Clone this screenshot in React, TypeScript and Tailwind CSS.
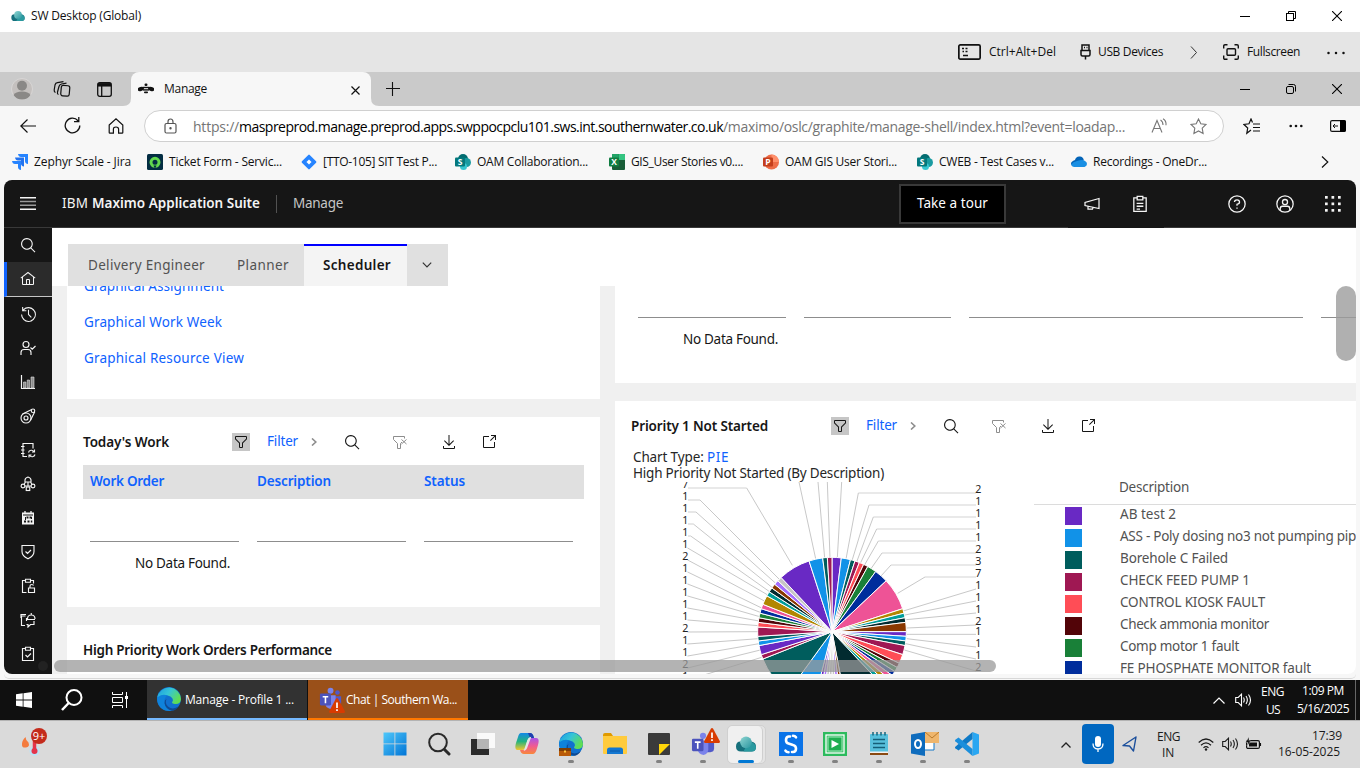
import { useLayoutEffect, useRef, useState } from "react";
import type { ReactNode } from "react";

const SEGOE = "font-['Open_Sans','Noto_Sans',sans-serif]";
const PLEX = "font-['Noto_Sans','Open_Sans',sans-serif]";

/** A single line of text whose tracking is adjusted to fill the width it is given. */
function Line({ w, className = "", children }: { w: number; className?: string; children: string }) {
  const ref = useRef<HTMLSpanElement>(null);
  const [gap, setGap] = useState(0);
  useLayoutEffect(() => {
    if (ref.current) {
      const natural = ref.current.getBoundingClientRect().width - gap * children.length;
      setGap((w - natural) / children.length);
    }
  }, [w, children]);
  return (
    <span className={`block shrink-0 whitespace-nowrap ${className}`} style={{ width: w }}>
      <span ref={ref} className="inline-block whitespace-pre" style={{ letterSpacing: gap }}>{children}</span>
    </span>
  );
}

/** 32-unit icon, drawn with fills. */
function Solid({ d, className = "size-4" }: { d: string[]; className?: string }) {
  return (
    <svg viewBox="0 0 32 32" className={`shrink-0 ${className}`} fill="currentColor">
      {d.map((p) => <path key={p} d={p} />)}
    </svg>
  );
}

/** 32-unit icon, drawn with strokes. */
function Outline({ className = "size-4", sw = 2, children }: { className?: string; sw?: number; children: ReactNode }) {
  return (
    <svg viewBox="0 0 32 32" className={`shrink-0 ${className}`} fill="none" stroke="currentColor" strokeWidth={sw}>
      {children}
    </svg>
  );
}

const SEARCH = ["M29,27.5859l-7.5521-7.5521a11.0177,11.0177,0,1,0-1.4141,1.4141L27.5859,29ZM4,13a9,9,0,1,1,9,9A9.01,9.01,0,0,1,4,13Z"];
const HOME = ["M16.6123,2.2138a1.01,1.01,0,0,0-1.2427,0L1,13.4194l1.2427,1.5717L4,13.6208V26a2.0041,2.0041,0,0,0,2,2H26a2.0037,2.0037,0,0,0,2-2V13.63L29.7573,15,31,13.4282ZM18,26H14V18h4Zm2,0V18a2.0023,2.0023,0,0,0-2-2H14a2.002,2.002,0,0,0-2,2v8H6V12.0615l10-7.79,10,7.8005V26Z"];
const RECENT = ["M20.59 22 15 16.41 15 7 17 7 17 15.58 22 20.59 20.59 22z", "M16,2A13.94,13.94,0,0,0,6,6.23V2H4v8h8V8H7.08A12,12,0,1,1,4,16H2A14,14,0,1,0,16,2Z"];
const FILTER = ["M18,28H14a2,2,0,0,1-2-2V18.41L4.59,11A2,2,0,0,1,4,9.59V6A2,2,0,0,1,6,4H26a2,2,0,0,1,2,2V9.59A2,2,0,0,1,27.41,11L20,18.41V26A2,2,0,0,1,18,28ZM6,6V9.59l8,8V26h4V17.59l8-8V6Z"];
const DOWNLOAD = ["M26 24v4H6V24H4v4a2 2 0 0 0 2 2H26a2 2 0 0 0 2-2V24zM26 14L24.59 12.59 17 20.17 17 2 15 2 15 20.17 7.41 12.59 6 14 16 24 26 14z"];
const LAUNCH = ["M26,28H6a2.0027,2.0027,0,0,1-2-2V6A2.0027,2.0027,0,0,1,6,4H16V6H6V26H26V16h2V26A2.0027,2.0027,0,0,1,26,28Z", "M20 2 20 4 26.586 4 18 12.586 19.414 14 28 5.414 28 12 30 12 30 2 20 2z"];

function WindowButtons({ rounded = false }: { rounded?: boolean }) {
  return (
    <div className="ml-auto mr-[18px] flex items-center gap-9">
      <svg width="10" height="10" className="shrink-0"><path d="M0 5.5h10" stroke="#000" /></svg>
      <svg width="10" height="10" className="shrink-0" fill="none" stroke="#000">
        <rect x=".5" y="2.5" width="7" height="7" rx={rounded ? 1.5 : 0} />
        <path d={rounded ? "M2.5.5h5q2 0 2 2v5" : "M2.5 2.5v-2h7v7h-2"} />
      </svg>
      <svg width="10" height="10" className="shrink-0"><path d="M0 0l10 10M10 0L0 10" stroke="#000" strokeWidth="1.1" /></svg>
    </div>
  );
}

function CloudIcon({ className }: { className: string }) {
  return (
    <svg viewBox="0 0 24 18" className={`shrink-0 ${className}`}>
      <defs>
        <linearGradient id="cl" x1="0" y1="0" x2="1" y2="1"><stop stopColor="#8fd6d2" /><stop offset="1" stopColor="#2a96a0" /></linearGradient>
      </defs>
      <path d="M5.500 6H18.500Q24 7 24 12.500T18.500 18H6Q0 18 0 12T5.500 6Z" fill="#16707c" />
      <path d="M14 8q3-3 7 0q3 2 3 5q0 5-5.500 5H9Z" fill="#2a9aa0" />
      <circle cx="12" cy="7" r="7" fill="url(#cl)" />
    </svg>
  );
}

function EdgeIcon({ className }: { className: string }) {
  return (
    <svg viewBox="0 0 24 24" className={`shrink-0 ${className}`}>
      <defs>
        <linearGradient id="eg" x1="0" y1="0" x2="1" y2=".5"><stop stopColor="#1a9be0" /><stop offset=".5" stopColor="#35c4d8" /><stop offset="1" stopColor="#5fdd55" /></linearGradient>
      </defs>
      <circle cx="12" cy="12" r="12" fill="#1170cf" />
      <path d="M.2 10.500A12 12 0 0 1 24 12q-.2 5.300-6 5q-4.200-.3-2.500-2.500Q17 12 13.500 9.500Q7 6 .2 10.500Z" fill="url(#eg)" />
      <path d="M.2 10.500Q5 6.500 10.500 8.500Q7 10.500 7.500 15q1 6.500 7.500 8.700Q6 25 2 18.500Q-.3 14.500.2 10.500Z" fill="#0f82db" />
      <path d="M9.500 12q-2 4 1.500 7.500q5 4 11-.5q-3 4.500-7 4.800q-6.500-1.500-7.500-7.500Q7.300 13 9.500 12Z" fill="#104a92" />
    </svg>
  );
}

function TeamsIcon({ className = "size-[26px]" }: { className?: string }) {
  return (
    <svg viewBox="0 0 26 26" className={`shrink-0 ${className}`}>
      <circle cx="20" cy="6" r="2.500" fill="#5059c9" /><circle cx="12.500" cy="4" r="3.200" fill="#7b83eb" />
      <path d="M16 10h8v7q0 4-4 4h-4Z" fill="#5059c9" />
      <path d="M7 9h11v9q0 5-5 6q-6-1-6-6Z" fill="#7b83eb" />
      <rect x="1" y="7" width="12" height="13" rx="1.200" fill="#4b53bc" />
      <path d="M4 10.500h6M7 10.500v7" stroke="#fff" strokeWidth="1.700" />
    </svg>
  );
}

function Warning() {
  return (
    <svg viewBox="0 0 16 15" className="h-[15px] w-4 shrink-0">
      <path d="M7 .6q1-1 2 0l7 13q0 1.400-1 1.400H1q-1 0-1-1.400Z" fill="#d83b01" />
      <path d="M8 4.500v5.500M8 11.200v1.800" stroke="#fff" strokeWidth="1.700" />
    </svg>
  );
}

function RemoteBars() {
  return (
    <>
      <div className="flex h-8 items-center bg-white pl-[11px]">
        <CloudIcon className="h-2.5 w-3.5" />
        <Line w={110} className="ml-1.5 text-[12px] leading-8 text-[#111]">SW Desktop (Global)</Line>
        <WindowButtons />
      </div>
      <div className="flex h-10 items-center bg-[#e5e5e5] pl-[958px] text-[12px] text-[#111]">
        <svg width="23" height="16" className="shrink-0" fill="none" stroke="#111" strokeWidth="1.700">
          <rect x=".85" y=".85" width="21.300" height="14.300" rx="1.500" />
          <path d="M4 4.500h2M7.500 4.500h2M4.500 7.500h1.500M7.500 7.500h2M5 11.500h5" strokeWidth="1.400" />
        </svg>
        <Line w={67} className="ml-2">Ctrl+Alt+Del</Line>
        <svg width="12" height="16" className="ml-6 shrink-0" fill="none" stroke="#111" strokeWidth="1.500">
          <path d="M2 6.500V1h7v5.500M1 6.500h9v4q0 1.500-1.500 1.500h-6Q1 12 1 10.500ZM5.500 12v3.500M4 3.500h1M6.500 3.500h1" />
        </svg>
        <Line w={65} className="ml-1.5">USB Devices</Line>
        <svg width="8" height="13" className="ml-[27px] shrink-0" fill="none" stroke="#333"><path d="M1 .5l5.500 6L1 12.500" /></svg>
        <svg width="16" height="16" className="ml-[25px] shrink-0" fill="none" stroke="#111" strokeWidth="1.400">
          <path d="M.7 4.500V2Q.7.7 2 .7h2.500M11.500.7H14q1.300 0 1.300 1.300v2.500M15.300 11.500V14q0 1.300-1.300 1.300h-2.500M4.500 15.300H2Q.7 15.300.7 14v-2.500" />
          <rect x="4" y="4.800" width="8.500" height="6.500" rx="1" />
        </svg>
        <Line w={53} className="ml-2">Fullscreen</Line>
        <svg width="18" height="4" className="ml-[27px] mt-0.5 shrink-0" fill="#111"><circle cx="1.500" cy="2" r="1.250" /><circle cx="9" cy="2" r="1.250" /><circle cx="16.500" cy="2" r="1.250" /></svg>
      </div>
    </>
  );
}

function TabStrip() {
  return (
    <div className="flex h-[34px] items-center bg-[#cacaca] pl-[11px]">
      <svg viewBox="0 0 22 22" className="size-[22px] shrink-0">
        <circle cx="11" cy="11" r="10.500" fill="#c4c0be" stroke="#d8d6d5" /><circle cx="11" cy="7.700" r="5" fill="#8a8886" /><path d="M2.500 17q2-3.500 8.500-3.500t8.500 3.500q-3 4.500-8.500 4.500T2.500 17Z" fill="#8a8886" />
      </svg>
      <svg width="18" height="17" className="ml-5 shrink-0" fill="none" stroke="#111" strokeWidth="1.200">
        <rect x="8" y="4.500" width="8.500" height="10.500" rx="2" transform="rotate(5 12 10)" /><path d="M5.500 13.500Q4 13 4.500 11L6 5.500Q6.500 3.500 8.500 3l5-.8M2.500 11.500Q1 11 1.200 9L2 4q.5-2 2.500-2.300l6-1" />
      </svg>
      <svg width="15" height="15" className="ml-[26px] shrink-0" fill="none" stroke="#111" strokeWidth="1.300">
        <rect x=".7" y=".7" width="13.600" height="13.600" rx="2" /><path d="M1 2.800h13" strokeWidth="3.500" /><path d="M4.700 4v10" />
      </svg>
      <div className="ml-[11px] flex h-full w-2 shrink-0 items-end"><svg width="8" height="8"><path d="M8 0v8H0Q8 8 8 0Z" fill="#f7f7f7" /></svg></div>
      <div className="flex h-full w-60 shrink-0 items-center rounded-t-lg bg-[#f7f7f7] pl-[7px]">
        <svg viewBox="0 0 16 12" className="h-3 w-4 shrink-0" fill="#111">
          <ellipse cx="2.800" cy="6" rx="3.200" ry="2" transform="rotate(-15 2.800 6)" /><ellipse cx="13.200" cy="6" rx="3.200" ry="2" transform="rotate(15 13.200 6)" />
          <rect x="6.500" y="0.500" width="3" height="2.500" rx="1.200" /><rect x="5" y="3.800" width="6" height="1.400" /><rect x="5" y="6.200" width="6" height="1.400" /><rect x="6" y="8.600" width="4" height="1.600" rx=".8" />
        </svg>
        <Line w={43} className="ml-2.5 text-[12px] text-[#111]">Manage</Line>
        <svg width="9" height="9" className="ml-[144px] mt-0.5 shrink-0"><path d="M.5.5l8 8M8.500.5l-8 8" stroke="#111" strokeWidth="1.200" /></svg>
      </div>
      <div className="flex h-full w-2 shrink-0 items-end"><svg width="8" height="8"><path d="M0 0v8h8Q0 8 0 0Z" fill="#f7f7f7" /></svg></div>
      <svg width="14" height="14" className="ml-[7px] shrink-0"><path d="M6.500 0v14M0 6.500h14" stroke="#111" strokeWidth="1.100" /></svg>
      <WindowButtons rounded />
    </div>
  );
}

function AddressBar() {
  return (
    <div className="flex h-10 items-center bg-[#f7f7f7] pl-5 text-[#111]">
      <svg width="16" height="14" className="-mt-px shrink-0" fill="none" stroke="currentColor" strokeWidth="1.200"><path d="M7.500 .5L.8 7l6.700 6.500M1 7h15" /></svg>
      <svg width="17" height="17" className="-mt-px ml-7 shrink-0" fill="none" stroke="currentColor" strokeWidth="1.300"><path d="M15.800 8.500A7.300 7.300 0 1 1 14 3.700M14.800 0v4.700H10" /></svg>
      <svg width="16" height="16" className="-mt-px ml-[27px] shrink-0" fill="none" stroke="currentColor" strokeWidth="1.200"><path d="M1.200 7L8 .9 14.800 7v7.500q0 .7-.7.7h-3.500v-4q0-2.200-2.600-2.200T5.400 11.200v4H1.900q-.7 0-.7-.7Z" /></svg>
      <div className="ml-5 flex h-8 w-[1080px] shrink-0 items-center rounded-full border border-[#d0d0d0] bg-white pl-[19px] text-[14px] text-[#757575]">
        <svg width="13" height="16" className="shrink-0" fill="none" stroke="#555" strokeWidth="1.200"><rect x="1" y="5.500" width="11" height="9.500" rx="1.500" /><path d="M4 5.500V4q0-3 2.500-3T9 4v1.500" /><circle cx="6.500" cy="10.200" r=".6" fill="#555" /></svg>
        <Line w={46} className="ml-4">https://</Line>
        <Line w={484} className="text-black">maspreprod.manage.preprod.apps.swppocpclu101.sws.int.southernwater.co.uk</Line>
        <Line w={402}>/maximo/oslc/graphite/manage-shell/index.html?event=loadap...</Line>
        <svg width="17" height="16" className="ml-[26px] shrink-0" fill="none" stroke="#777" strokeWidth="1.100"><path d="M1 14.500L6 2.500l5 12M2.800 10.500h6.500M9.500 2q2.500 1.500 2.500 5M12 .7q3.500 2 3 6.500" /></svg>
        <svg viewBox="0 0 17 17" className="ml-[22px] size-[17px] shrink-0" fill="none" stroke="#777" strokeWidth="1.100"><path d="M8.500 1l2.300 4.800 5.200.7-3.800 3.700.9 5.200-4.600-2.500-4.600 2.500.9-5.200L1 6.500l5.200-.7Z" /></svg>
      </div>
      <svg width="18" height="17" className="ml-[19px] shrink-0" fill="none" stroke="currentColor" strokeWidth="1.200"><path d="M8 12l-4.200 3.300.9-5.300L1 6.500l5-.7L8 1l1.500 3.500M10 6h7M10 9.500h7M10 13h7" /></svg>
      <svg width="14" height="4" className="ml-7 shrink-0" fill="#111"><circle cx="1.700" cy="2" r="1.300" /><circle cx="7" cy="2" r="1.300" /><circle cx="12.300" cy="2" r="1.300" /></svg>
      <svg width="16" height="12" className="ml-[27px] shrink-0"><rect x=".6" y=".6" width="14.800" height="10.800" rx="1.500" fill="none" stroke="#111" strokeWidth="1.200" /><path d="M10 0h4q2 0 2 2v8q0 2-2 2h-4Z" /><path d="M8 6H3M5 4L3 6l2 2" fill="none" stroke="#111" /></svg>
    </div>
  );
}

function OfficeTile({ letter, dark, base, light, round }: { letter: string; dark: string; base: string; light: string; round: boolean }) {
  return (
    <svg viewBox="0 0 16 16" className="size-4 shrink-0">
      {round
        ? <><circle cx="8.500" cy="8" r="7.500" fill={base} /><path d="M8.500 .5A7.500 7.500 0 0 1 16 8H8.500Z" fill={light} /></>
        : <><rect x="3" y="0" width="13" height="16" rx="1" fill={base} /><path d="M9.500 0H15q1 0 1 1v5H9.500Z" fill={light} /><path d="M3 0h6.500v6H3Z" fill="#21a366" /></>}
      <rect x="0" y="3.500" width="10" height="9" rx="1" fill={dark} />
      <text x="5" y="11" textAnchor="middle" fontSize="8.500" fontWeight="700" fill="#fff">{letter}</text>
    </svg>
  );
}

const sharepoint = (
  <svg viewBox="0 0 16 16" className="size-4 shrink-0">
    <circle cx="8" cy="5" r="5" fill="#036c70" /><circle cx="11.500" cy="8.500" r="4.500" fill="#1a9ba1" /><circle cx="8.500" cy="12.500" r="3.500" fill="#37c6d0" />
    <rect x="0" y="3.500" width="10" height="9" rx="1" fill="#03787c" />
    <text x="5" y="11" textAnchor="middle" fontSize="8.500" fontWeight="700" fill="#fff">S</text>
  </svg>
);

const bookmarks: { text: string; w: number; box: string; icon: ReactNode }[] = [
  { text: "Zephyr Scale - Jira", w: 97, box: "w-[135px]", icon: <svg viewBox="0 0 16 16" className="size-4 shrink-0"><path d="M6 0h10v10q-3-.5-3-3V3H9Q6.500 3 6 0Z" fill="#2684ff" /><path d="M3 3.500h9v9q-3-.5-3-3v-3H6Q3.500 6.500 3 3.500Z" fill="#2272ee" /><path d="M0 7h9v9q-3-.5-3-3v-3H3Q.5 10 0 7Z" fill="#2684ff" /></svg> },
  { text: "Ticket Form - Servic...", w: 113, box: "w-[154px]", icon: <svg viewBox="0 0 16 16" className="size-4 shrink-0"><rect width="16" height="16" rx="1.500" fill="#032d42" /><circle cx="8" cy="8.300" r="4" fill="none" stroke="#62d84e" strokeWidth="3" /><path d="M6.500 11.500h3l-1.500 3Z" fill="#032d42" /></svg> },
  { text: "[TTO-105] SIT Test P...", w: 114, box: "w-[154px]", icon: <svg viewBox="0 0 16 16" className="size-4 shrink-0"><rect x="2.500" y="2.500" width="11" height="11" rx="1" transform="rotate(45 8 8)" fill="#2684ff" /><rect x="6.200" y="6.200" width="3.600" height="3.600" transform="rotate(45 8 8)" fill="#fff" /></svg> },
  { text: "OAM Collaboration...", w: 111, box: "w-[154px]", icon: sharepoint },
  { text: "GIS_User Stories v0....", w: 112, box: "w-[154px]", icon: <OfficeTile letter="X" dark="#107c41" base="#185c37" light="#33c481" round={false} /> },
  { text: "OAM GIS User Stori...", w: 112, box: "w-[154px]", icon: <OfficeTile letter="P" dark="#c43e1c" base="#ed6c47" light="#ff8f6b" round /> },
  { text: "CWEB - Test Cases v...", w: 115, box: "w-[154px]", icon: sharepoint },
  { text: "Recordings - OneDr...", w: 114, box: "w-[154px]", icon: <svg viewBox="0 0 16 12" className="h-3 w-4 shrink-0"><path d="M4 4q1-4 5-3.500 3 .3 3.800 3.500L9 8 2 10Q0 9.500 0 7.500T4 4Z" fill="#0364b8" /><path d="M6 5q6-2 8 0 2 .8 2 3T13.500 11H3Q.5 10.500.3 8.500Q2 5.500 6 5Z" fill="#1a8fe3" /></svg> },
];

function Bookmarks() {
  return (
    <div className="flex h-[34px] items-center bg-[#f7f7f7] pb-2 pl-3 pt-0 text-[12px] text-[#111]">
      <div className="flex w-[1309px] shrink-0 items-center pt-1.5">
        {bookmarks.map((b) => (
          <div key={b.text} className={`flex shrink-0 items-center gap-1.5 ${b.box}`}>
            {b.icon}
            <Line w={b.w}>{b.text}</Line>
          </div>
        ))}
      </div>
      <svg width="8" height="12" className="mt-1.5 shrink-0" fill="none" stroke="#111" strokeWidth="1.200"><path d="M1 .5L6.800 6 1 11.500" /></svg>
    </div>
  );
}

function SuiteHeader() {
  return (
    <div className="flex h-12 shrink-0 items-center border-b border-[#393939] bg-[#161616] pl-4 text-[13.5px] text-[#f4f4f4]">
      <svg width="16" height="13" className="shrink-0"><path d="M0 .75h16M0 12.250h16" stroke="#f4f4f4" strokeWidth="1.300" /><path d="M0 4.500h16M0 8.200h16" stroke="#999" strokeWidth="1.600" /></svg>
      <Line w={30} className="ml-[26px]">IBM </Line>
      <Line w={168} className="font-semibold">Maximo Application Suite</Line>
      <div className="ml-4 h-[18px] w-px bg-[#525252]" />
      <Line w={50} className="ml-4 text-[#c6c6c6]">Manage</Line>
      <div className="ml-[556px] flex h-10 w-[107px] shrink-0 items-center border-2 border-[#393939] bg-black pl-4">
        <Line w={71} className="text-white">Take a tour</Line>
      </div>
      <div className="-mb-px ml-[62px] flex h-12 w-24 shrink-0 items-center border-b border-[#161616] pl-4">
        <Outline sw={2.5}><path d="M30 5L2 13v6l28 6ZM8 21.500V26h9l1-2.500" /></Outline>
        <Outline sw={2.3} className="ml-[31px] h-[18px] w-[18px]"><path d="M11 5H5v24h22V5h-6M11 2.500h10v6H11ZM10 15h12M10 20h12M10 25h6" /></Outline>
      </div>
      <Outline sw={2.3} className="ml-16 size-[18px]"><circle cx="16" cy="16" r="14.500" /><path d="M11.500 12.500Q11.500 8.500 16 8.500t4.500 4Q20.500 16 16 16.500V19M16 22v2.500" /></Outline>
      <Outline sw={2.3} className="ml-[30px] size-[18px]"><circle cx="16" cy="16" r="14.500" /><circle cx="16" cy="12.500" r="4.500" /><path d="M7.500 27v-2.500q0-4.500 4-4.500h9q4 0 4 4.500V27" /></Outline>
      <svg viewBox="0 0 16 16" className="ml-[31px] size-4 shrink-0" fill="#f4f4f4">
        {[0, 6.500, 13].map((y) => [0, 6.500, 13].map((x) => <rect key={`${x}-${y}`} x={x} y={y} width="2.700" height="2.700" />))}
      </svg>
    </div>
  );
}

const sideIcons: ReactNode[] = [
  <Outline sw={2.3}><circle cx="12" cy="9" r="6" /><path d="M2 30v-5q0-6 6-6h8q6 0 6 6v5M21 15l3.500 3.500L31 12" /></Outline>,
  <svg viewBox="0 0 16 16" className="size-4"><path d="M1.500 1v13.500H15" stroke="#f4f4f4" fill="none" strokeWidth="1.200" /><path d="M3.500 8H6v6H3.500ZM7.200 6h2.300v8H7.200ZM11 3h3v11h-3Z" fill="#8d8d8d" stroke="#e0e0e0" strokeWidth=".6" /></svg>,
  <Outline sw={2.3}><circle cx="12" cy="20" r="10" /><circle cx="12" cy="20" r="4" /><circle cx="26" cy="5.500" r="3.500" /><path d="M5 12L23.500 3M21 24.500l8.500-17" /></Outline>,
  <Outline sw={2.3}><path d="M14 29H6V3h20v10M2 9h7M2 16h7M2 23h7M17 21a6 6 0 0 1 11-1.500M29 15v5h-5M30 25a6 6 0 0 1-11 1.500M18 31v-5h5" /></Outline>,
  <Outline sw={2.3}><path d="M10 12V8q0-4 6-6 6 2 6 6v4ZM11 12l-3 5M21 12l3 5M16 12v9M10 20h12" /><circle cx="6" cy="20" r="3.800" /><circle cx="26" cy="20" r="3.800" /><rect x="12.500" y="22" width="7" height="7" /></Outline>,
  <svg viewBox="0 0 16 16" className="size-4">
    <rect x="2" y="2.500" width="12" height="12" fill="#f4f4f4" /><path d="M5 1v3M11 1v3" stroke="#f4f4f4" strokeWidth="1.300" /><path d="M3 5h10M5.500 7v3M11.500 7v2" stroke="#161616" strokeWidth="1" /><path d="M6.500 6.500h2v2h-2ZM9.500 6.500h2v2h-2ZM4 10.500h2v2H4ZM7.500 10.500h2v2h-2ZM10.800 10.500h1.500v2h-1.500Z" fill="#161616" />
  </svg>,
  <Outline sw={2.3}><path d="M4 3h24v12q0 9-12 14.500Q4 24 4 15ZM11 15l4 4 7-7" /></Outline>,
  <Outline sw={2.3}><path d="M13 29H5V5h6M21 5h6v6M11 2.500h10v6H11ZM17 20h12v9H17ZM20 19v-3q0-3 3.500-3t3.500 2" /></Outline>,
  <Outline sw={2.3}><path d="M11 8H3v19h7M2 4v8M2 5h10M13 15h17M15 14q0-8 7.500-8T30 14M22.500 2v4M28 18v7h-7l-5 5v-5h-3M13 12v6" /></Outline>,
  <Outline sw={2.3}><path d="M11 5H5v24h22V5h-6M11 2.500h10v6H11ZM11 18l4 4 7-7" /></Outline>,
];

function Sidebar() {
  return (
    <div className="w-12 shrink-0 bg-[#161616] text-[#f4f4f4]">
      <div className="flex h-[34px] items-center justify-center"><Solid d={SEARCH} className="size-[17px]" /></div>
      <div className="flex h-[35px] items-center justify-center border-b border-[#c6c6c6] border-l-[3px] border-l-[#0f62fe] bg-[#2b2b2b] pr-[3px]"><Solid d={HOME} /></div>
      <div className="flex h-[34px] items-center justify-center"><Solid d={RECENT} className="size-[17px]" /></div>
      {sideIcons.map((icon, i) => <div key={i} className="flex h-[34px] items-center justify-center">{icon}</div>)}
    </div>
  );
}

function Tools() {
  return (
    <div className="flex items-center text-[#161616]">
      <div className="flex size-[18px] shrink-0 items-center justify-center bg-[#c6c6c6]"><Solid d={FILTER} /></div>
      <Line w={31} className="-mt-0.5 ml-[17px] text-[13.5px] text-[#0f62fe]">Filter</Line>
      <svg width="6" height="8" className="-mt-px ml-[13px] shrink-0" fill="none" stroke="#8d8d8d" strokeWidth="1.600"><path d="M1 .5L4.800 4 1 7.500" /></svg>
      <Solid d={SEARCH} className="ml-[27px] size-[17px]" />
      <Outline className="ml-[31px] size-4 text-[#8d8d8d]"><path d="M25 9V5H3v6l8 8v10h6V19l3-3M19 11l10 9M29 11l-10 9" /></Outline>
      <Solid d={DOWNLOAD} className="ml-[33px] size-4" />
      <Solid d={LAUNCH} className="ml-6 size-4" />
    </div>
  );
}

const P = { purple: "#6929c4", blue: "#1192e8", teal: "#005d5d", mag: "#9f1853", red: "#ff4d56", maroon: "#520408", green: "#198038", navy: "#002d9c", pink: "#ee5396", gold: "#b28600", cyan: "#009d9a", ink: "#022b30", brown: "#8a3800", lilac: "#a56eff", grey: "#c6c6c6" };

const slices: [number, string][] = [
  [2, P.purple], [2, P.blue], [1, P.teal], [1, P.mag], [1, P.red], [1, P.maroon], [2, P.green], [3, P.navy], [7, P.pink], [1, P.gold], [1, P.cyan], [1, P.ink], [2, P.brown],
  [1, P.purple], [1, P.blue], [1, P.teal], [2, P.mag], [2, P.red], [1, P.maroon], [1, P.green], [1, P.navy], [1, P.pink], [1, P.gold], [1, P.cyan], [9, P.ink], [1, P.brown], [1, P.lilac], [1, P.grey],
  [1, P.grey], [1, P.grey], [1, P.lilac], [1, P.purple], [6, P.blue], [9, P.teal], [1, P.mag], [2, P.purple], [1, P.blue], [1, P.teal], [2, P.mag], [1, P.red], [1, P.maroon], [1, P.green], [1, P.navy], [1, P.pink],
  [2, P.gold], [1, P.cyan], [1, P.ink], [1, P.brown], [1, P.lilac], [1, P.grey], [7, P.purple], [3, P.blue], [1, P.teal], [1, P.mag],
];

/* Leader lines: label edge, elbow and rim, in thirds of a pixel. */
const rightLeads: [string, number, number, number, number, number][] = [
  ["2", 279, 730, 279, 693, 477], ["1", 315, 762, 315, 711, 482], ["1", 351, 775, 351, 725, 486], ["1", 387, 785, 387, 736, 490], ["1", 423, 790, 423, 748, 496], ["2", 459, 801, 459, 768, 506], ["3", 495, 828, 495, 798, 528], ["7", 531, 930, 531, 848, 580],
  ["1", 567, 1083, 567, 865, 633], ["1", 603, 1083, 603, 870, 645], ["1", 639, 1083, 639, 874, 659], ["2", 675, 1083, 675, 875, 684], ["1", 703, 1083, 703, 875, 703], ["1", 741, 1083, 741, 875, 716], ["1", 777, 1083, 777, 872, 731], ["2", 813, 1083, 813, 868, 750],
];
const leftLeads: [string, number, number, number, number][] = [
  ["7", 264, 395, 532, 496], ["1", 300, 255, 493, 538], ["1", 336, 243, 481, 549], ["1", 372, 235, 472, 563], ["1", 408, 227, 465, 576], ["1", 444, 218, 460, 586], ["2", 480, 218, 450, 604], ["1", 516, 218, 440, 624], ["1", 552, 218, 438, 638], ["1", 588, 218, 434, 650], ["1", 624, 218, 432, 663], ["1", 660, 218, 430, 677], ["2", 696, 218, 430, 695], ["1", 732, 218, 430, 716], ["1", 768, 218, 432, 731], ["2", 804, 218, 436, 750], ["1", 840, 218, 440, 772],
];

function Pie() {
  const cx = 651, cy = 695, r = 223;
  let at = 0;
  const wedge = ([n, color]: [number, string], i: number) => {
    const a = (at / 100) * 2 * Math.PI;
    at += n;
    const b = (at / 100) * 2 * Math.PI;
    return <path key={i} d={`M${cx} ${cy}L${cx + r * Math.sin(a)} ${cy - r * Math.cos(a)}A${r} ${r} 0 0 1 ${cx + r * Math.sin(b)} ${cy - r * Math.cos(b)}Z`} fill={color} stroke="#fff" strokeWidth="3" />;
  };
  return (
    <svg viewBox="0 246 1200 576" className="h-48 w-[400px] shrink-0">
      <path d="M552 246L602 476M609 246L629 474M637 246L645 473M680 246L667 473" stroke="#c8c8c8" strokeWidth="3" />
      {rightLeads.map(([t, y, ex, ey, rx, ry]) => (
        <g key={y}>
          <path d={`M1083 ${y}L${ex} ${ey}`} stroke="#e2e2e2" strokeWidth="5" /><path d={`M${ex} ${ey}L${rx} ${ry}`} stroke="#c8c8c8" strokeWidth="3" />
          <text x="1090" y={(y === 703 ? 705 : y) - 1} textAnchor="middle" fontSize="32" fill="#222">{t}</text>
        </g>
      ))}
      {leftLeads.map(([t, y, ex, rx, ry]) => (
        <g key={y}>
          <path d={`M219 ${y}H${ex}`} stroke="#e2e2e2" strokeWidth="5" /><path d={`M${ex} ${y}L${rx} ${ry}`} stroke="#c8c8c8" strokeWidth="3" />
          <text x="211" y={y} textAnchor="middle" fontSize="32" fill="#222">{t}</text>
        </g>
      ))}
      {slices.map(wedge)}
    </svg>
  );
}

const legend: [string, number, string][] = [
  ["AB test 2", 56, "bg-[#6929c4]"], ["ASS - Poly dosing no3 not pumping pip", 236, "bg-[#1192e8]"], ["Borehole C Failed", 108, "bg-[#005d5d]"], ["CHECK FEED PUMP 1", 130, "bg-[#9f1853]"],
  ["CONTROL KIOSK FAULT", 145, "bg-[#ff4d56]"], ["Check ammonia monitor", 149, "bg-[#520408]"], ["Comp motor 1 fault", 119, "bg-[#198038]"], ["FE PHOSPHATE MONITOR fault", 191, "bg-[#002d9c]"],
];

function Dashboard() {
  return (
    <div className="flex min-h-0 flex-1 gap-[15px] overflow-hidden bg-[#f0f0f0] pl-[15px] text-[13.5px]">
      <div className="flex w-[533px] shrink-0 flex-col gap-[18px]">
        <div className="h-[113px] shrink-0 overflow-hidden bg-white pl-[17px] leading-5 text-[#0f62fe]">
          <Line w={140} className="-mt-2.5">Graphical Assignment</Line>
          <Line w={138} className="mt-4">Graphical Work Week</Line>
          <Line w={160} className="mt-4">Graphical Resource View</Line>
        </div>
        <div className="h-[190px] shrink-0 bg-white px-4 pt-4">
          <div className="flex h-[18px] items-center">
            <Line w={86} className="mr-[63px] font-semibold text-[#161616]">Today's Work</Line>
            <Tools />
          </div>
          <div className="mt-3.5 flex h-[34px] items-center gap-[18px] bg-[#e0e0e0] pl-[7px] font-semibold text-[#0f62fe]">
            <div className="-mt-px w-[149px]"><Line w={74}>Work Order</Line></div>
            <div className="-mt-px w-[149px]"><Line w={74}>Description</Line></div>
            <div className="-mt-px w-[149px]"><Line w={41}>Status</Line></div>
          </div>
          <div className="mt-[42px] flex gap-[18px] pl-[7px]">
            <div className="h-px w-[149px] bg-[#8d8d8d]" /><div className="h-px w-[149px] bg-[#8d8d8d]" /><div className="h-px w-[149px] bg-[#8d8d8d]" />
          </div>
          <Line w={95} className="ml-[52px] mt-[11px] leading-5 text-[#161616]">No Data Found.</Line>
        </div>
        <div className="flex-1 bg-white pl-4 pt-[15px]">
          <Line w={249} className="font-semibold leading-5 text-[#161616]">High Priority Work Orders Performance</Line>
        </div>
      </div>
      <div className="flex w-[741px] shrink-0 flex-col gap-[18px]">
        <div className="h-[97px] shrink-0 bg-white pl-[23px] pt-[31px]">
          <div className="flex gap-[18px]">
            <div className="h-px w-[148px] bg-[#8d8d8d]" /><div className="h-px w-[147px] bg-[#8d8d8d]" /><div className="h-px w-[334px] bg-[#8d8d8d]" /><div className="h-px flex-1 bg-[#8d8d8d]" />
          </div>
          <Line w={95} className="ml-[45px] mt-[11px] leading-5 text-[#161616]">No Data Found.</Line>
        </div>
        <div className="flex-1 bg-white">
          <div className="flex h-[50px] items-center pl-4">
            <Line w={137} className="mr-[63px] font-semibold text-[#161616]">Priority 1 Not Started</Line>
            <Tools />
          </div>
          <div className="flex">
            <div className="w-[419px] shrink-0 leading-4 text-[#262626]">
              <div className="-mt-0.5 flex pl-[18px]"><Line w={74}>Chart Type: </Line><Line w={22} className="text-[#0f62fe]">PIE</Line></div>
              <Line w={251} className="ml-[18px]">High Priority Not Started (By Description)</Line>
              <div className="pt-px"><Pie /></div>
            </div>
            <div className="flex-1 text-[#525252]">
              <Line w={70} className="ml-[85px] mt-[26px] leading-5">Description</Line>
              <div className="mt-[7px] h-px bg-[#dcdcdc]" />
              {legend.map(([text, w, color]) => (
                <div key={text} className="flex h-[22px] pl-[31px]">
                  <div className={`mt-0.5 h-[18px] w-[17px] shrink-0 ${color}`} />
                  <Line w={w} className="-mt-px ml-[38px] leading-5">{text}</Line>
                </div>
              ))}
            </div>
          </div>
        </div>
      </div>
    </div>
  );
}

function MaximoApp() {
  return (
    <div className={`relative mx-1 flex h-[494px] flex-col overflow-hidden rounded-t-lg rounded-b-lg bg-white ${PLEX}`}>
      <SuiteHeader />
      <div className="flex min-h-0 flex-1">
        <Sidebar />
        <div className="flex min-w-0 flex-1 flex-col">
          <div className="flex h-[58px] shrink-0 pl-4 pt-4 text-[13.5px] leading-[42px] text-[#525252]">
            <div className="w-[150px] bg-[#e0e0e0] pl-5"><Line w={117}>Delivery Engineer</Line></div>
            <div className="w-[86px] bg-[#e0e0e0] pl-[19px]"><Line w={52}>Planner</Line></div>
            <div className="w-[103px] border-t-2 border-[#0000ff] bg-[#f4f4f4] pl-[19px] font-semibold leading-[38px] text-[#161616]"><Line w={68}>Scheduler</Line></div>
            <div className="flex w-[41px] items-center justify-center bg-[#e0e0e0] pr-px">
              <svg width="10" height="6" fill="none" stroke="#333" strokeWidth="1.200"><path d="M.8.7L5 5 9.200.7" /></svg>
            </div>
          </div>
          <Dashboard />
        </div>
      </div>
      <div className="absolute bottom-[3px] left-[34px] size-2.5 rounded-full bg-[#222]" />
      <div className="absolute bottom-[2px] left-[50px] h-3 w-[942px] rounded-full bg-[#9a9a9a]/75" />
      <div className="absolute right-0 top-[106px] h-[75px] w-5 rounded-full bg-[#9c9c9c]/80" />
    </div>
  );
}

function Speaker({ className }: { className: string }) {
  return (
    <svg viewBox="0 0 17 14" className={`h-3.5 w-[17px] shrink-0 ${className}`} fill="none" stroke="currentColor" strokeWidth="1.100">
      <path d="M.7 4.500h2.500L6.500 1.200v11.600L3.200 9.500H.7ZM8.500 4.500q1.500 2.500 0 5M11 3q2.700 4 0 8M13.500 1.500q4 5.500 0 11" />
    </svg>
  );
}

function RemoteTaskbar() {
  return (
    <div className="flex h-10 items-center bg-[#101010] pl-4 text-[12px] text-white">
      <svg width="16" height="16" className="shrink-0" fill="#fff"><path d="M0 2.300L6.700 1.300v6.200H0ZM7.500 1.200L16 0v7.500H7.500ZM0 8.400h6.700v6.300L0 13.700ZM7.500 8.400H16V16l-8.500-1.200Z" /></svg>
      <svg width="22" height="22" className="ml-[29px] shrink-0" fill="none" stroke="#fff" strokeWidth="2"><circle cx="13" cy="8.500" r="7.500" /><path d="M7.700 14L1 21" strokeWidth="2.500" /></svg>
      <svg width="17" height="16" className="ml-[29px] shrink-0" fill="none" stroke="#fff"><path d="M.5 0v2.500h10V0M.5 16v-2.500h10V16M.5 5.500h10v5H.5ZM14.500 0v16" /><rect x="13" y="4" width="3" height="3" fill="#fff" stroke="none" /></svg>
      <div className="ml-[18px] flex h-full w-40 shrink-0 items-center border-b-2 border-[#76b9ff] bg-[#323232] pl-2.5">
        <EdgeIcon className="size-6" />
        <Line w={109} className="ml-1 mt-0.5">Manage - Profile 1 ...</Line>
      </div>
      <div className="ml-px flex h-full w-40 shrink-0 items-center border-b-2 border-[#ff7800] bg-[#9a5019] pl-[11px]">
        <div className="relative"><TeamsIcon className="size-6" /><div className="absolute -bottom-0.5 left-2.5"><Warning /></div></div>
        <Line w={111} className="ml-[3px] mt-0.5">Chat | Southern Wa...</Line>
      </div>
      <svg width="12" height="7" className="ml-[745px] shrink-0" fill="none" stroke="#fff" strokeWidth="1.200"><path d="M.5 6.500L6 1l5.500 5.500" /></svg>
      <Speaker className="ml-2.5" />
      <div className="ml-[9px] mt-px w-[23px] shrink-0 leading-[18px]"><Line w={23}>ENG</Line><Line w={14} className="ml-[5px]">US</Line></div>
      <div className="ml-3 w-[53px] shrink-0 leading-[18px]"><Line w={42} className="ml-1.5">1:09 PM</Line><Line w={52} className="ml-px">5/16/2025</Line></div>
      <div className="ml-1.5 h-full w-px bg-[#666]" />
    </div>
  );
}

const dockIcons: { dot: boolean; art: ReactNode }[] = [
  { dot: false, art: <svg width="24" height="24"><defs><linearGradient id="wg" x1="0" y1="0" x2="1" y2="1"><stop stopColor="#50c8fa" /><stop offset="1" stopColor="#0074d6" /></linearGradient></defs><path d="M.5.5h11v11H.500ZM12.300.5h11.200v11H12.300ZM.5 12.300h11v11.200H.500ZM12.300 12.300h11.200v11.200H12.300Z" fill="url(#wg)" /></svg> },
  { dot: false, art: <svg width="24" height="24" fill="none" stroke="#2a2a2a"><circle cx="11" cy="10.500" r="8.800" strokeWidth="2" /><path d="M17.500 17.500l4.500 4.500" strokeWidth="3" strokeLinecap="round" /></svg> },
  { dot: false, art: <svg width="24" height="24"><path d="M6 1h18v15H6Z" fill="#fafafa" /><path d="M0 7h18v16H0Z" fill="#2b2b2b" /><path d="M6 7h12v10H6Z" fill="#b5b5b5" /></svg> },
  { dot: false, art: <svg width="24" height="24" viewBox="0 0 24 24"><defs><linearGradient id="c1" x1="0" y1="0" x2="0" y2="1"><stop stopColor="#1488e8" /><stop offset=".5" stopColor="#24b47e" /><stop offset="1" stopColor="#f3c62f" /></linearGradient><linearGradient id="c2" x1="0" y1="0" x2="0" y2="1"><stop stopColor="#a855e8" /><stop offset=".5" stopColor="#f05a92" /><stop offset="1" stopColor="#f9883a" /></linearGradient></defs><path d="M6 1h9q3 0 4 5h-3q-3 0-4 4l-1 4q-1 4-4 4H3q-4 0-2-7l2-6Q4 1 6 1Z" fill="url(#c1)" /><path d="M18 22H9q-3 0-4-4h3q3 0 4-4l1-4q1-4 4-4h4q4 0 2 7l-1.500 5Q20 22 18 22Z" fill="url(#c2)" /><path d="M13 1h2q3 0 4 5h-4Z" fill="#203fae" /><path d="M13 8.500q.7-2 2-2.500l-3.500 9.500q-.5 1.500-1.500 2Z" fill="#e6e6e6" stroke="#e6e6e6" strokeWidth="1.500" /></svg> },
  { dot: true, art: <div className="relative"><EdgeIcon className="size-6" /><svg width="12" height="9" className="absolute bottom-0 left-0"><path d="M0 1h12v8H0Z" fill="#b85a08" /><path d="M0 1h12v3H0Z" fill="#7d3c05" /><rect x="5" y="3.500" width="2" height="2" fill="#ffc83d" /></svg></div> },
  { dot: false, art: <svg width="24" height="24"><path d="M0 3q0-2 2-2h6l2 3H0Z" fill="#e09a00" /><path d="M0 4h24v17q0 1-1 1H1q-1 0-1-1Z" fill="#ffcb3d" /><path d="M4 22v-4q0-2.500 2.500-2.500h11Q20 15.500 20 18v4Z" fill="#1377d1" /><path d="M7 19h10" stroke="#0b58a8" /></svg> },
  { dot: true, art: <svg width="24" height="24"><rect x="1" y="1" width="22" height="22" rx="1" fill="#3a3a3a" /><path d="M12 12h11L12 23Z" fill="#ffd60a" /></svg> },
  { dot: true, art: <div className="relative"><TeamsIcon className="size-[25px]" /><div className="absolute -right-1 -top-1"><Warning /></div></div> },
  { dot: true, art: null },
  { dot: true, art: <svg width="24" height="24"><rect width="24" height="24" fill="#0a73e8" /><path d="M11 4.500H9.500Q7 5 7 8t2.500 3.500L14 13q3 .7 3 3.700t-3 3.300h-1M14 3.800q2 0 3 1.500M9.500 20.200q-2 0-3-1.500" stroke="#fff" strokeWidth="2.600" fill="none" strokeLinecap="round" /></svg> },
  { dot: true, art: <svg width="24" height="24"><rect width="24" height="24" fill="#2cbb5d" /><rect x="3" y="3" width="18" height="18" fill="none" stroke="#fff" strokeWidth="1.300" /><rect x="5" y="5" width="14" height="14" fill="#1fae50" stroke="#a7ebc0" /><path d="M8.500 8l7.500 4-7.500 4Z" fill="#fff" /></svg> },
  { dot: true, art: <svg width="24" height="24"><rect x="3" y="2" width="18" height="21" rx="1" fill="#58c0dc" /><path d="M3 20.500h18v2.500H3Z" fill="#8a4a12" /><path d="M3 19.500h18v1.500H3Z" fill="#f2f2f2" /><path d="M6 0v3.500M10 0v3.500M14 0v3.500M18 0v3.500" stroke="#17667e" strokeWidth="1.500" /><path d="M6 7.500h12M6 11.500h12M6 15.500h12" stroke="#155f78" strokeWidth="1.600" /></svg> },
  { dot: true, art: <svg width="28" height="24" className="ml-1"><path d="M13 6h10v12H13Z" fill="#fff" stroke="#1478c8" /><path d="M0 2.500L14 0v24L0 21.500Z" fill="#0f6cbd" /><ellipse cx="7" cy="12" rx="3" ry="4" fill="none" stroke="#fff" strokeWidth="2" /><path d="M14 0h14v11H14Z" fill="#efb66d" /><path d="M14 0l7 6 7-6" fill="none" stroke="#b97a2c" /></svg> },
  { dot: true, art: <svg width="24" height="24" viewBox="0 0 24 24"><path d="M17.500 0L24 2.500v19L17.500 24Z" fill="#2aa7f2" /><path d="M17.500 0v7L3.500 18.500.3 16.300q-.6-.8 0-1.500Z" fill="#0f7ac6" /><path d="M17.500 24v-7L3.500 5.500.3 7.700q-.6.8 0 1.500Z" fill="#1b8fdc" /></svg> },
];

function HostTaskbar() {
  return (
    <div className="flex h-12 items-center border-t border-[#b3b3b3] bg-[#dadada] pl-[21px] text-[12px] text-[#1b1b1b]">
      <svg width="28" height="30" className="-mt-1.5 shrink-0">
        <path d="M1 18q-.5-4 3.500-8 0 3 3 5.500Q9 20 5 20.500T1 18Z" fill="#f47b3d" /><circle cx="13.500" cy="24" r="5" fill="#b9e3f7" /><path d="M13.500 12v12" stroke="#e4344b" strokeWidth="3.500" /><circle cx="13.500" cy="24" r="3" fill="#e4344b" />
        <circle cx="18" cy="9" r="8" fill="#c42b1c" />
        <text x="18" y="13" textAnchor="middle" fontSize="11" fill="#fff">9+</text>
      </svg>
      <div className="ml-[324px] flex h-full shrink-0">
        {dockIcons.map(({ dot, art }, i) => art ? (
          <div key={i} className="flex h-full w-11 flex-col items-center pt-[11px]">
            <div className="flex h-6 w-11 items-center justify-center">{art}</div>
            {dot && <div className="mt-1 h-[3px] w-1.5 rounded-full bg-[#828282]" />}
          </div>
        ) : (
          <div key={i} className="flex h-full w-11 pl-[2px] pt-1">
            <div className="flex h-[39px] w-[39px] shrink-0 rounded-[5px] border border-[#d0d0d0] bg-[#e4e4e4]">
              <div className="flex w-[35px] flex-col items-center rounded-[5px] border-r border-[#cfcfcf] bg-[#f0f0f0] pl-px">
                <div className="flex h-[34px] items-center pt-px"><CloudIcon className="h-4 w-5" /></div>
                <div className="h-[3px] w-4 rounded-full bg-[#0078d4]" />
              </div>
            </div>
          </div>
        ))}
      </div>
      <svg width="10" height="6" className="ml-[72px] shrink-0" fill="none" stroke="#222" strokeWidth="1.300"><path d="M.5 5.500L5 1l4.500 4.500" /></svg>
      <div className="-mt-px ml-[11px] flex h-10 w-8 shrink-0 items-center justify-center rounded bg-[#0067c0]">
        <svg width="12" height="17"><rect x="3" y="0" width="6" height="11" rx="3" fill="#fff" /><path d="M1 7.500q0 5.500 5 5.500t5-5.500M6 13v3" stroke="#fff" fill="none" strokeWidth="1.300" /></svg>
      </div>
      <svg width="15" height="16" className="-mt-0.5 ml-2 shrink-0" fill="none" stroke="#1b4f9c" strokeWidth="1.400" strokeLinejoin="round"><path d="M14 1L1 9.500l6.500.5 4 5Z" /></svg>
      <div className="ml-5 w-[23px] shrink-0 leading-4"><Line w={23}>ENG</Line><Line w={12} className="ml-[5px]">IN</Line></div>
      <svg width="16" height="13" className="-mt-px ml-[18px] shrink-0" fill="none" stroke="#1b1b1b" strokeWidth="1.200"><path d="M.7 4.500q7.300-7 14.600 0M3 7.300q5-4.800 10 0M5.500 9.800q2.500-2.500 5 0" /><circle cx="8" cy="11.500" r="1.200" fill="#1b1b1b" stroke="none" /></svg>
      <Speaker className="ml-2 -mt-px" />
      <svg width="17" height="13" className="-mt-0.5 ml-[6px] shrink-0"><rect x="1.600" y="3.600" width="12.800" height="7.800" rx="1.500" fill="none" stroke="#111" strokeWidth="1.200" /><rect x="4" y="5.500" width="8" height="4" fill="#111" /><path d="M15.300 6v3" stroke="#111" strokeWidth="1.500" /><path d="M4 0L.5 5.500H3L2 9l4-5H4Z" fill="#111" stroke="#dadada" strokeWidth=".4" /></svg>
      <div className="-mt-px ml-[17px] w-[63px] shrink-0 leading-4"><Line w={30} className="ml-[33px]">17:39</Line><Line w={62} className="-ml-px">16-05-2025</Line></div>
    </div>
  );
}

export default function App() {
  return (
    <div className={`flex h-[768px] w-[1360px] flex-col overflow-hidden bg-[#f7f7f7] ${SEGOE}`}>
      <RemoteBars />
      <TabStrip />
      <AddressBar />
      <Bookmarks />
      <MaximoApp />
      <div className="h-1.5 shrink-0 px-1"><div className="h-[5px] rounded-b-lg border-b border-[#d8d8d8]" /></div>
      <RemoteTaskbar />
      <HostTaskbar />
    </div>
  );
}
